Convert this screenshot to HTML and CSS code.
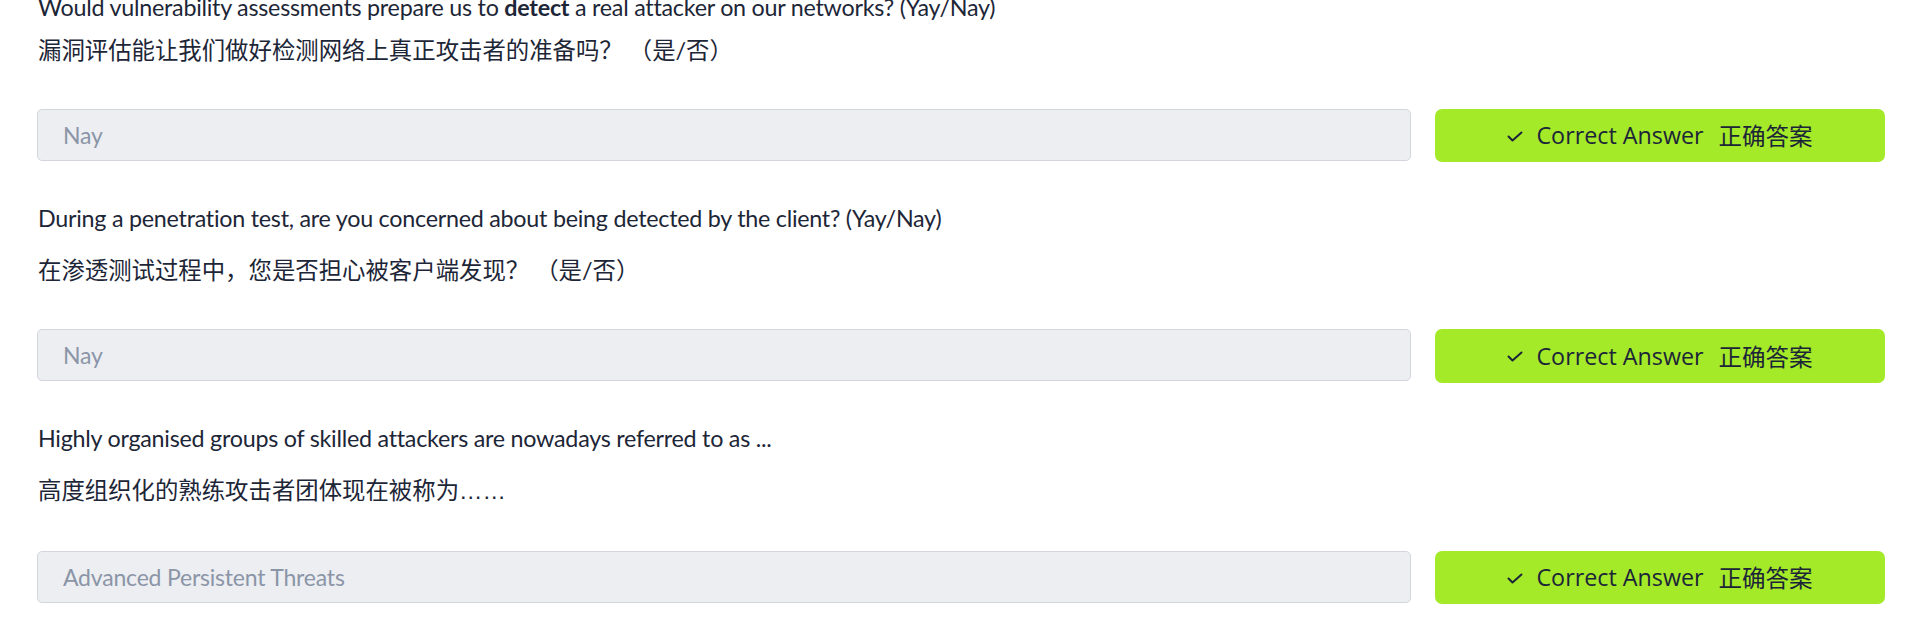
FILE: index.html
```html
<!DOCTYPE html>
<html lang="en">
<head>
<meta charset="utf-8">
<title>Questions</title>
<link rel="stylesheet" href="styles.css">
</head>
<body>
<main class="questions">
  <section class="question">
    <p class="q-en">Would vulnerability assessments prepare us to <strong>detect</strong> a real attacker on our networks? (Yay/Nay)</p>
    <p class="q-zh">漏洞评估能让我们做好检测网络上真正攻击者的准备吗？ （是/否）</p>
    <div class="answer-row">
      <div class="answer-input">Nay</div>
      <button class="answer-btn" type="button">
        <svg class="check" viewBox="0 0 16 11" width="16" height="11"><polyline points="1.5,5.5 5.5,9.5 14.5,1.5" fill="none" stroke="currentColor" stroke-width="2" stroke-linecap="round" stroke-linejoin="round"/></svg>
        <span class="btn-en">Correct Answer</span>
        <span class="btn-zh">正确答案</span>
      </button>
    </div>
  </section>
  <section class="question">
    <p class="q-en">During a penetration test, are you concerned about being detected by the client? (Yay/Nay)</p>
    <p class="q-zh">在渗透测试过程中，您是否担心被客户端发现？ （是/否）</p>
    <div class="answer-row">
      <div class="answer-input">Nay</div>
      <button class="answer-btn" type="button">
        <svg class="check" viewBox="0 0 16 11" width="16" height="11"><polyline points="1.5,5.5 5.5,9.5 14.5,1.5" fill="none" stroke="currentColor" stroke-width="2" stroke-linecap="round" stroke-linejoin="round"/></svg>
        <span class="btn-en">Correct Answer</span>
        <span class="btn-zh">正确答案</span>
      </button>
    </div>
  </section>
  <section class="question">
    <p class="q-en">Highly organised groups of skilled attackers are nowadays referred to as ...</p>
    <p class="q-zh">高度组织化的熟练攻击者团体现在被称为<span class="ellipsis">……</span></p>
    <div class="answer-row">
      <div class="answer-input">Advanced Persistent Threats</div>
      <button class="answer-btn" type="button">
        <svg class="check" viewBox="0 0 16 11" width="16" height="11"><polyline points="1.5,5.5 5.5,9.5 14.5,1.5" fill="none" stroke="currentColor" stroke-width="2" stroke-linecap="round" stroke-linejoin="round"/></svg>
        <span class="btn-en">Correct Answer</span>
        <span class="btn-zh">正确答案</span>
      </button>
    </div>
  </section>
</main>
</body>
</html>
```

FILE: styles.css
```css
html, body {
  margin: 0;
  padding: 0;
  background: #ffffff;
}

body {
  font-family: "Lato", "Noto Sans CJK SC", sans-serif;
  color: #1d2637;
  overflow: hidden;
}

.questions {
  display: flex;
  flex-direction: column;
  gap: 38.5px;
  padding: 0 30px 0 37px;
  margin-top: -10px;
}

.question {
  display: flex;
  flex-direction: column;
}

.q-en,
.q-zh {
  margin: 0;
  font-size: 23.3px;
  line-height: 34px;
  padding-left: 1px;
}

.q-en {
  letter-spacing: -0.25px;
}

.q-en strong {
  font-weight: 700;
}

.q-zh {
  margin-top: 18px;
  font-family: "Lato", "Noto Sans CJK SC", sans-serif;
  font-size: 23.4px;
}

.ellipsis {
  font-family: "Liberation Sans", sans-serif;
}

.answer-row {
  display: flex;
  align-items: flex-start;
  gap: 24px;
  margin-top: 42.5px;
}

.question:first-child .q-zh {
  margin-top: 9px;
}

.question:first-child .answer-row {
  margin-top: 41.5px;
}

.answer-input {
  flex: 1;
  box-sizing: border-box;
  height: 52px;
  padding: 0 25px;
  display: flex;
  align-items: center;
  background: #eceef2;
  border: 1px solid #d3d6dc;
  border-radius: 5px;
  font-size: 23px;
  color: #8b95a7;
  letter-spacing: -0.2px;
}

.answer-btn {
  width: 450px;
  height: 53.5px;
  flex: none;
  display: flex;
  align-items: center;
  justify-content: center;
  background: #a4ea29;
  border: none;
  border-radius: 7px;
  padding: 0;
  color: #1c2538;
  font-family: "Open Sans", "Noto Sans CJK SC", sans-serif;
  font-size: 23.3px;
  cursor: pointer;
}

.check {
  margin-right: 13px;
  margin-top: 2px;
}

.btn-zh {
  margin-left: 15px;
  font-family: "Noto Sans CJK SC", sans-serif;
  font-size: 23.5px;
}
```
